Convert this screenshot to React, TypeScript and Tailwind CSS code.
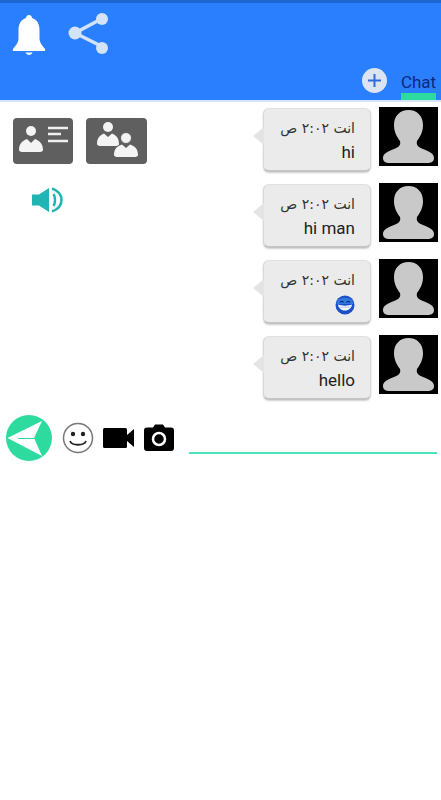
import React from "react";

const Avatar = () => (
  <div className="w-[59px] h-[59px] bg-black shrink-0">
    <svg viewBox="0 0 59 59" className="w-full h-full block">
      <path d="M29.5 3C38 3 44 9 44 18C44 25 41 30 38 34C37 38 39 40 44 42C51 44.500 55 47 55 51C55 55 52 56 48 56H11C7 56 4 55 4 51C4 47 8 44.500 15 42C20 40 22 38 21 34C18 30 15 25 15 18C15 9 21 3 29.5 3Z" fill="#c9c9c9" />
    </svg>
  </div>
);

const Emoji = () => (
  <svg viewBox="0 0 20 20" className="w-[20px] h-[20px] block">
    <circle cx="10" cy="10" r="9.500" fill="#1c50c8" />
    <path d="M3 5C7 2 13 2 17 5L18.500 9H1.500Z" fill="#2f78e0" />
    <path d="M5 7.500C6 6 8 6 8.500 7.500M11.500 7.500C12 6 14 6 15 7.500" stroke="#0d2c80" strokeWidth="1.200" fill="none" />
    <path d="M3 9.500C7 11 13 11 17 9.500C16.500 13.500 13 15.500 10 15.500C7 15.500 3.500 13.500 3 9.500Z" fill="#f2f6ff" />
    <path d="M4.500 12.200H15.500" stroke="#9db4e0" strokeWidth="0.700" />
  </svg>
);

const Bubble = ({ children }: { children: React.ReactNode }) => (
  <div className="relative w-[108px] h-[64px] bg-[#ebebeb] rounded-[6px] border-b-2 border-b-[#c4c4c4] border-x border-x-[#d8d8d8] border-t border-t-[#e0e0e0] shadow-[0_1px_2px_rgba(0,0,0,0.2)] pr-[15px] pl-[8px] pt-[9px] flex flex-col items-end">
    <span className="absolute left-[-11px] top-[18px] w-0 h-0 border-y-[9px] border-y-transparent border-r-[11px] border-r-[#e4e4e4]" />
    <div dir="rtl" className="text-[14px] leading-[20px] text-[#333333] whitespace-nowrap font-['DejaVu_Sans',sans-serif]">انت ٢:٠٢ ص</div>
    <div className="h-[26px] mt-[2px] flex items-center text-[17px] text-[#222222] font-['Roboto',sans-serif]">{children}</div>
  </div>
);

const Message = ({ children }: { children: React.ReactNode }) => (
  <div className="flex items-start gap-[8px] h-[76px]">
    <div className="pt-[1px]"><Bubble>{children}</Bubble></div>
    <Avatar />
  </div>
);

export default function App() {
  return (
    <div className="w-[441px] h-[800px] bg-white overflow-hidden font-['Roboto',sans-serif]">
      <header className="h-[102px] bg-[#2a7fff] border-t-[3px] border-t-[#1c66d0] border-b-2 border-b-[#d5e6fb] flex flex-col justify-between">
        <div className="flex items-start pl-[12px] pt-[9px] gap-[22px]">
          <svg viewBox="0 0 34 41" className="w-[34px] h-[41px] mt-[2px]">
            <path d="M17 1C19 1 20 2.500 20 4C25 5.500 27.500 10 27.500 16V24C27.500 29 30 31 33 35C33.700 36.500 33 37 32 37H2C1 37 .3 36.500 1 35C4 31 6.500 29 6.500 24V16C6.500 10 9 5.500 14 4C14 2.500 15 1 17 1Z" fill="#ffffff" />
            <path d="M13.500 38.500H20.500C20 40 18.500 41 17 41C15.500 41 14 40 13.500 38.500Z" fill="#ffffff" />
          </svg>
          <svg viewBox="0 0 42 42" className="w-[42px] h-[42px]">
            <path d="M7 21L35 6M7 21L35 35" stroke="#d3e3f8" strokeWidth="3.500" />
            <circle cx="34" cy="7" r="6" fill="#d3e3f8" />
            <circle cx="7" cy="21" r="6.500" fill="#d3e3f8" />
            <circle cx="34" cy="36" r="6" fill="#d3e3f8" />
          </svg>
        </div>
        <div className="flex justify-end items-end pr-[5px]">
          <div className="w-[25px] h-[25px] rounded-full bg-[#dbe4f2] flex items-center justify-center mr-[14px] mb-[7px]">
            <svg viewBox="0 0 25 25" className="w-[25px] h-[25px]">
              <path d="M12.500 6V19M6 12.500H19" stroke="#2a6fd8" strokeWidth="2" />
            </svg>
          </div>
          <div className="w-[35px] flex flex-col items-center">
            <span className="text-[17px] leading-[22px] text-[#0b2a78] whitespace-nowrap">Chat</span>
            <span className="w-[35px] h-[7px] bg-[#2edb9f]" />
          </div>
        </div>
      </header>

      <main className="flex justify-between pt-[5px] pr-[3px]">
        <div className="pl-[13px] pt-[11px]">
          <div className="flex gap-[13px]">
            <div className="w-[60px] h-[46px] rounded-[4px] bg-[#5f5f5f] flex items-center justify-center">
              <svg viewBox="0 0 60 46" className="w-[60px] h-[46px]">
                <circle cx="18" cy="13" r="5" fill="#f4f4f4" />
                <path d="M6 32C6 26 9 23 14 21L18 25L22 21C27 23 30 26 30 32C30 33.500 28 34 26 34H10C8 34 6 33.500 6 32Z" fill="#f4f4f4" />
                <path d="M35 10H55M35 16H48M35 23H55" stroke="#f0f0f0" strokeWidth="2.500" />
              </svg>
            </div>
            <div className="w-[61px] h-[46px] rounded-[4px] bg-[#5f5f5f] flex items-center justify-center">
              <svg viewBox="0 0 61 46" className="w-[61px] h-[46px]">
                <circle cx="22" cy="9" r="5" fill="#f4f4f4" />
                <path d="M11 26C11 20 14 17 18 15.500L22 19L26 15.500C30 17 33 20 33 26C33 27.500 31 28 29 28H15C13 28 11 27.500 11 26Z" fill="#f4f4f4" />
                <circle cx="40" cy="20" r="5.500" fill="#f4f4f4" stroke="#5f5f5f" strokeWidth="1" />
                <path d="M28 37C28 31 31 28 36 26.500L40 30L44 26.500C49 28 52 31 52 37C52 38.500 50 39 48 39H32C30 39 28 38.500 28 37Z" fill="#f4f4f4" />
              </svg>
            </div>
          </div>
          <div className="pl-[18px] pt-[21px]">
            <svg viewBox="0 0 32 30" className="w-[32px] h-[30px]">
              <path d="M1 9.500H8L18 3V27L8 20.500H1Z" fill="#1fb5b5" />
              <path d="M22.500 9C24.500 12 24.500 18 22.500 21" stroke="#1fb5b5" strokeWidth="2.500" fill="none" />
              <path d="M21 3.500C28 6 30.500 11 30.500 15C30.500 19 28 24 21 26.500" stroke="#1fb5b5" strokeWidth="2.500" fill="none" />
            </svg>
          </div>
        </div>
        <div className="flex flex-col">
          <Message>hi</Message>
          <Message>hi man</Message>
          <Message><Emoji /></Message>
          <Message>hello</Message>
        </div>
      </main>

      <div className="flex items-center pl-[6px] pr-[4px] mt-[3px] h-[47px]">
        <div className="w-[46px] h-[46px] rounded-full bg-[#2edb9f] shrink-0">
          <svg viewBox="0 0 46 46" className="w-[46px] h-[46px]">
            <path d="M1.500 23L36 6L28 23L36 41Z" fill="#ffffff" />
            <path d="M12 23.500H28" stroke="#2edb9f" strokeWidth="1" />
          </svg>
        </div>
        <svg viewBox="0 0 32 32" className="w-[32px] h-[32px] ml-[10px] shrink-0">
          <circle cx="16" cy="16" r="14.500" fill="#ffffff" stroke="#777777" strokeWidth="1.500" />
          <circle cx="11" cy="12" r="2.200" fill="#222222" />
          <circle cx="21" cy="12" r="2.200" fill="#222222" />
          <path d="M8 19C10 24 22 24 24 19" stroke="#222222" strokeWidth="1.800" fill="none" />
        </svg>
        <svg viewBox="0 0 31 20" className="w-[31px] h-[20px] ml-[9px] shrink-0">
          <rect x="0" y="0" width="24" height="20" rx="1.500" fill="#000000" />
          <path d="M24 7L31 1V19L24 13Z" fill="#000000" />
        </svg>
        <svg viewBox="0 0 30 27" className="w-[30px] h-[27px] ml-[10px] shrink-0">
          <path d="M9 3.500L11 0.500H19L21 3.500H27C29 3.500 30 4.500 30 6.500V24C30 26 29 27 27 27H3C1 27 0 26 0 24V6.500C0 4.500 1 3.500 3 3.500Z" fill="#000000" />
          <circle cx="15" cy="15" r="6" fill="none" stroke="#ffffff" strokeWidth="2.500" />
        </svg>
        <div className="ml-[15px] flex-1 self-end mb-[7px] h-[2px] bg-[#49e3c0]" />
      </div>
    </div>
  );
}
